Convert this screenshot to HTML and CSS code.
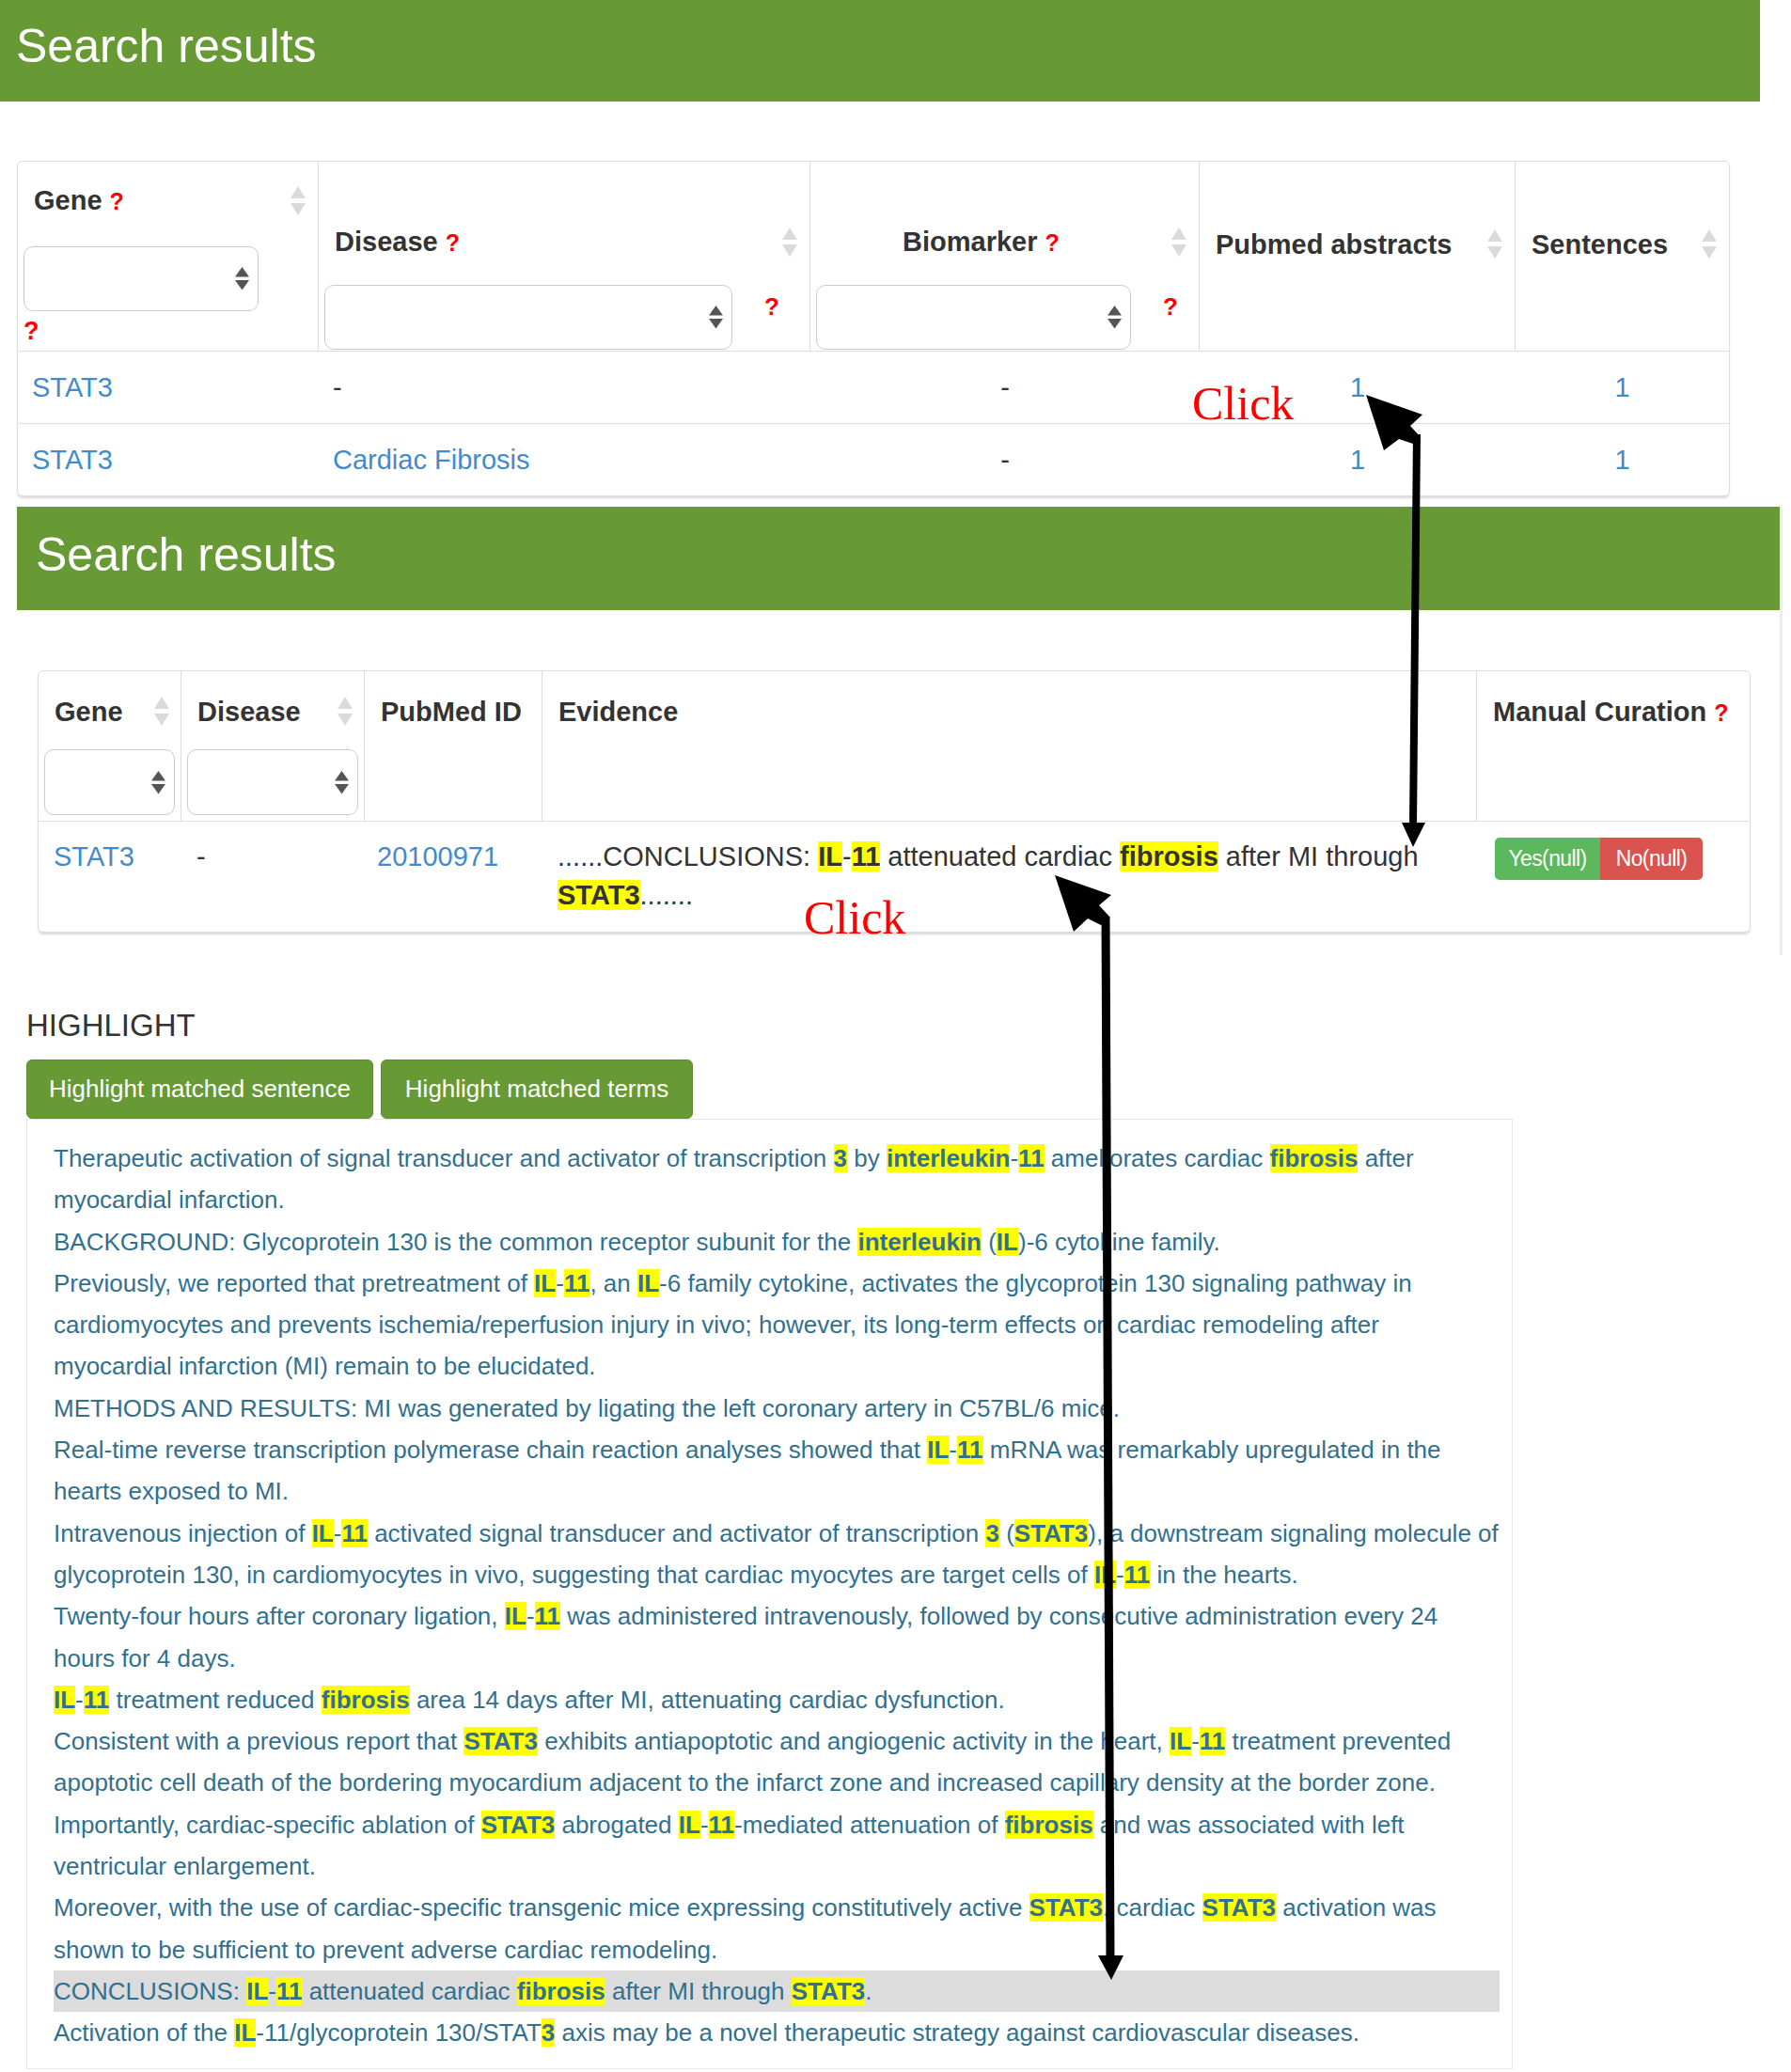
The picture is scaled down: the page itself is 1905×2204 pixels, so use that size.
FILE: index.html
```html
<!DOCTYPE html>
<html lang="en">
<head>
<meta charset="utf-8">
<title>Search results</title>
<link rel="stylesheet" href="styles.css">
</head>
<body>
<div class="page">

  <div class="banner banner-a"><h1>Search results</h1></div>

  <div class="card card-a">
    <table class="grid grid-a">
      <colgroup>
        <col class="a-gene"><col class="a-disease"><col class="a-bio"><col class="a-pub"><col class="a-sent">
      </colgroup>
      <thead>
        <tr>
          <th class="th-gene">
            <div class="th-title"><span>Gene <span class="q">?</span></span><svg class="sort" viewBox="0 0 16 32"><path d="M8 0L16 13H0Z"/><path d="M0 18H16L8 31Z"/></svg></div>
            <div class="sel sel-gene"><svg class="sel-arrow" viewBox="0 0 15 25"><path d="M7.5 0L15 10.5H0Z"/><path d="M0 14H15L7.5 24.5Z"/></svg></div>
            <div class="q q-below">?</div>
          </th>
          <th class="th-mid">
            <div class="th-title"><span>Disease <span class="q">?</span></span><svg class="sort" viewBox="0 0 16 32"><path d="M8 0L16 13H0Z"/><path d="M0 18H16L8 31Z"/></svg></div>
            <div class="sel-row">
              <div class="sel sel-disease"><svg class="sel-arrow" viewBox="0 0 15 25"><path d="M7.5 0L15 10.5H0Z"/><path d="M0 14H15L7.5 24.5Z"/></svg></div>
              <span class="q q-side">?</span>
            </div>
          </th>
          <th class="th-mid th-bio">
            <div class="th-title"><span>Biomarker <span class="q">?</span></span><svg class="sort" viewBox="0 0 16 32"><path d="M8 0L16 13H0Z"/><path d="M0 18H16L8 31Z"/></svg></div>
            <div class="sel-row">
              <div class="sel sel-bio"><svg class="sel-arrow" viewBox="0 0 15 25"><path d="M7.5 0L15 10.5H0Z"/><path d="M0 14H15L7.5 24.5Z"/></svg></div>
              <span class="q q-side">?</span>
            </div>
          </th>
          <th class="th-low">
            <div class="th-title"><span>Pubmed abstracts</span><svg class="sort" viewBox="0 0 16 32"><path d="M8 0L16 13H0Z"/><path d="M0 18H16L8 31Z"/></svg></div>
          </th>
          <th class="th-low">
            <div class="th-title"><span>Sentences</span><svg class="sort" viewBox="0 0 16 32"><path d="M8 0L16 13H0Z"/><path d="M0 18H16L8 31Z"/></svg></div>
          </th>
        </tr>
      </thead>
      <tbody>
        <tr>
          <td><a class="lnk">STAT3</a></td>
          <td class="dash">-</td>
          <td class="ctr">-</td>
          <td class="ctr"><a class="lnk">1</a></td>
          <td class="ctr"><a class="lnk">1</a></td>
        </tr>
        <tr>
          <td><a class="lnk">STAT3</a></td>
          <td><a class="lnk">Cardiac Fibrosis</a></td>
          <td class="ctr">-</td>
          <td class="ctr"><a class="lnk">1</a></td>
          <td class="ctr"><a class="lnk">1</a></td>
        </tr>
      </tbody>
    </table>
  </div>

  <div class="shot2">
    <div class="banner banner-b"><h1>Search results</h1></div>

    <div class="card card-b">
      <table class="grid grid-b">
        <colgroup>
          <col class="b-gene"><col class="b-disease"><col class="b-pmid"><col class="b-evid"><col class="b-cur">
        </colgroup>
        <thead>
          <tr>
            <th>
              <div class="th-title"><span>Gene</span><svg class="sort" viewBox="0 0 16 32"><path d="M8 0L16 13H0Z"/><path d="M0 18H16L8 31Z"/></svg></div>
              <div class="sel sel-b"><svg class="sel-arrow" viewBox="0 0 15 25"><path d="M7.5 0L15 10.5H0Z"/><path d="M0 14H15L7.5 24.5Z"/></svg></div>
            </th>
            <th>
              <div class="th-title"><span>Disease</span><svg class="sort" viewBox="0 0 16 32"><path d="M8 0L16 13H0Z"/><path d="M0 18H16L8 31Z"/></svg></div>
              <div class="sel sel-b"><svg class="sel-arrow" viewBox="0 0 15 25"><path d="M7.5 0L15 10.5H0Z"/><path d="M0 14H15L7.5 24.5Z"/></svg></div>
            </th>
            <th class="th-plain"><div class="th-title"><span>PubMed ID</span></div></th>
            <th class="th-plain"><div class="th-title"><span>Evidence</span></div></th>
            <th class="th-plain"><div class="th-title"><span>Manual Curation <span class="q">?</span></span></div></th>
          </tr>
        </thead>
        <tbody>
          <tr>
            <td><a class="lnk">STAT3</a></td>
            <td>-</td>
            <td class="pmid"><a class="lnk">20100971</a></td>
            <td class="evid">......CONCLUSIONS: <b class="hl">IL</b>-<b class="hl">11</b> attenuated cardiac <b class="hl">fibrosis</b> after MI through <b class="hl">STAT3</b>.......</td>
            <td class="cur-cell"><div class="cur"><span class="yes">Yes(null)</span><span class="no">No(null)</span></div></td>
          </tr>
        </tbody>
      </table>
    </div>
  </div>

  <section class="highlight">
    <h4>HIGHLIGHT</h4>
    <div class="tabs">
      <span class="tab tab-1">Highlight matched sentence</span>
      <span class="tab tab-2">Highlight matched terms</span>
    </div>
    <div class="panel">
      <div class="sent">Therapeutic activation of signal transducer and activator of transcription <b class="hl">3</b> by <b class="hl">interleukin</b>-<b class="hl">11</b> ameliorates cardiac <b class="hl">fibrosis</b> after myocardial infarction.</div>
      <div class="sent">BACKGROUND: Glycoprotein 130 is the common receptor subunit for the <b class="hl">interleukin</b> (<b class="hl">IL</b>)-6 cytokine family.</div>
      <div class="sent">Previously, we reported that pretreatment of <b class="hl">IL</b>-<b class="hl">11</b>, an <b class="hl">IL</b>-6 family cytokine, activates the glycoprotein 130 signaling pathway in cardiomyocytes and prevents ischemia/reperfusion injury in vivo; however, its long-term effects on cardiac remodeling after myocardial infarction (MI) remain to be elucidated.</div>
      <div class="sent">METHODS AND RESULTS: MI was generated by ligating the left coronary artery in C57BL/6 mice.</div>
      <div class="sent">Real-time reverse transcription polymerase chain reaction analyses showed that <b class="hl">IL</b>-<b class="hl">11</b> mRNA was remarkably upregulated in the hearts exposed to MI.</div>
      <div class="sent">Intravenous injection of <b class="hl">IL</b>-<b class="hl">11</b> activated signal transducer and activator of transcription <b class="hl">3</b> (<b class="hl">STAT3</b>), a downstream signaling molecule of glycoprotein 130, in cardiomyocytes in vivo, suggesting that cardiac myocytes are target cells of <b class="hl">IL</b>-<b class="hl">11</b> in the hearts.</div>
      <div class="sent">Twenty-four hours after coronary ligation, <b class="hl">IL</b>-<b class="hl">11</b> was administered intravenously, followed by consecutive administration every 24 hours for 4 days.</div>
      <div class="sent"><b class="hl">IL</b>-<b class="hl">11</b> treatment reduced <b class="hl">fibrosis</b> area 14 days after MI, attenuating cardiac dysfunction.</div>
      <div class="sent">Consistent with a previous report that <b class="hl">STAT3</b> exhibits antiapoptotic and angiogenic activity in the heart, <b class="hl">IL</b>-<b class="hl">11</b> treatment prevented apoptotic cell death of the bordering myocardium adjacent to the infarct zone and increased capillary density at the border zone.</div>
      <div class="sent">Importantly, cardiac-specific ablation of <b class="hl">STAT3</b> abrogated <b class="hl">IL</b>-<b class="hl">11</b>-mediated attenuation of <b class="hl">fibrosis</b> and was associated with left ventricular enlargement.</div>
      <div class="sent">Moreover, with the use of cardiac-specific transgenic mice expressing constitutively active <b class="hl">STAT3</b>, cardiac <b class="hl">STAT3</b> activation was shown to be sufficient to prevent adverse cardiac remodeling.</div>
      <div class="sent sent-on">CONCLUSIONS: <b class="hl">IL</b>-<b class="hl">11</b> attenuated cardiac <b class="hl">fibrosis</b> after MI through <b class="hl">STAT3</b>.</div>
      <div class="sent">Activation of the <b class="hl">IL</b>-11/glycoprotein 130/STAT<b class="hl">3</b> axis may be a novel therapeutic strategy against cardiovascular diseases.</div>
    </div>
  </section>

  <div class="annot">
    <span class="click click-1">Click</span>
    <span class="click click-2">Click</span>
    <svg class="arrows" viewBox="0 0 1905 2204" width="1905" height="2204">
      <line x1="1507" y1="462" x2="1503" y2="880" stroke="#000" stroke-width="8"/>
      <polygon points="1453,420 1513,441 1500,453 1511,465 1503,472 1488,467 1472,479" fill="#000"/>
      <polygon points="1491,875 1516,875 1503,901" fill="#000"/>
      <line x1="1176" y1="976" x2="1181" y2="2085" stroke="#000" stroke-width="9"/>
      <polygon points="1122,931 1182,952 1169,963 1181,976 1171,984 1157,977 1142,991" fill="#000"/>
      <polygon points="1168,2080 1195,2080 1182,2106" fill="#000"/>
    </svg>
  </div>

</div>
</body>
</html>
```

FILE: styles.css
```css
* {
  box-sizing: border-box;
}

body {
  margin: 0;
  background: #ffffff;
  font-family: "Liberation Sans", Arial, Helvetica, sans-serif;
  color: #333333;
}

.page {
  position: relative;
  width: 1905px;
  height: 2204px;
  overflow: hidden;
}

/* ---------- banners ---------- */
.banner {
  background: #679a35;
  color: #ffffff;
}

.banner h1 {
  margin: 0;
  font-size: 50px;
  line-height: 50px;
  font-weight: normal;
}

.banner-a {
  width: 1872px;
  height: 108px;
  padding: 24px 0 0 17px;
}

.banner-b {
  height: 110px;
  padding: 26px 0 0 20px;
}

/* ---------- cards / tables ---------- */
.card {
  width: 1822px;
  background: #ffffff;
  border: 1px solid #dddddd;
  border-radius: 6px;
  box-shadow: 0 3px 3px -1px rgba(0, 0, 0, 0.16);
  overflow: hidden;
}

.card-a {
  margin: 63px 0 0 18px;
}

.card-b {
  margin: 64px 0 0 22px;
}

.grid {
  width: 100%;
  border-collapse: separate;
  border-spacing: 0;
  table-layout: fixed;
  font-size: 29px;
}

.grid th {
  text-align: left;
  vertical-align: top;
  font-weight: bold;
  padding: 0 6px;
  border-bottom: 1px solid #dddddd;
  border-right: 1px solid #dddddd;
}

.grid th:last-child {
  border-right: none;
}

.grid td {
  padding: 0 15px;
  line-height: 36px;
  border-bottom: 1px solid #dddddd;
  vertical-align: middle;
}

.grid tbody tr:last-child td {
  border-bottom: none;
}

.th-title {
  display: flex;
  align-items: center;
  justify-content: space-between;
  line-height: 36px;
  padding: 0 7px 0 11px;
  white-space: nowrap;
}

.q {
  color: #ff0000;
  font-weight: bold;
  font-size: 25px;
}

.sort {
  flex: none;
  width: 16px;
  height: 32px;
  fill: #dadada;
}

.sel {
  display: flex;
  align-items: center;
  justify-content: flex-end;
  height: 69px;
  padding-right: 9px;
  background: #ffffff;
  border: 1px solid #cbcbcb;
  border-radius: 10px;
}

.sel-arrow {
  width: 15px;
  height: 25px;
  fill: #555555;
}

.sel-row {
  display: flex;
  align-items: flex-start;
  gap: 34px;
  margin-top: 27px;
}

.q-side {
  font-size: 26px;
  line-height: 30px;
  margin-top: 8px;
}

.q-below {
  font-size: 27px;
  line-height: 30px;
  margin-top: 6px;
}

/* table A */
.a-gene { width: 320px; }
.a-disease { width: 523px; }
.a-bio { width: 414px; }
.a-pub { width: 336px; }
.a-sent { width: 227px; }

.grid-a thead th {
  height: 202px;
}

.grid-a .th-gene {
  padding-top: 23px;
}

.grid-a .th-mid {
  padding-top: 67px;
}

.grid-a .th-low {
  padding-top: 70px;
}

.grid-a .th-bio .th-title {
  padding-left: 92px;
}

.sel-gene {
  width: 250px;
  margin-top: 30px;
}

.sel-disease {
  width: 434px;
}

.sel-bio {
  width: 335px;
}

.grid-a tbody td {
  height: 77px;
}

.grid-a tbody tr:last-child td {
  height: 76px;
}

.ctr {
  text-align: center;
}

.lnk {
  color: #428bca;
  text-decoration: none;
}

/* table B */
.shot2 {
  width: 1878px;
  margin: 11px 0 0 18px;
  padding-bottom: 24px;
  border-right: 3px solid #ececec;
}

.b-gene { width: 152px; }
.b-disease { width: 195px; }
.b-pmid { width: 189px; }
.b-evid { width: 994px; }
.b-cur { width: 290px; }

.grid-b thead th {
  height: 160px;
  padding-top: 25px;
}

.grid-b .th-title {
  padding-right: 6px;
}

.sel-b {
  height: 70px;
  margin-top: 22px;
}

.grid-b tbody td {
  height: 117px;
  vertical-align: top;
  padding: 17px 16px 0 16px;
  line-height: 41px;
}

.grid-b .pmid {
  padding-left: 13px;
}

.grid-b .cur-cell {
  padding-left: 19px;
}

.evid .hl {
  color: #333333;
}

.cur {
  display: flex;
  height: 45px;
}

.yes,
.no {
  display: flex;
  align-items: center;
  justify-content: center;
  height: 45px;
  color: #ffffff;
  font-size: 23px;
  letter-spacing: -0.6px;
}

.yes {
  width: 112px;
  background: #5cb85c;
  border-radius: 5px 0 0 5px;
}

.no {
  width: 109px;
  background: #d9534f;
  border-radius: 0 5px 5px 0;
}

/* ---------- highlight section ---------- */
.highlight {
  width: 1581px;
  margin: 55px 0 0 28px;
}

.highlight h4 {
  margin: 0;
  font-size: 33px;
  line-height: 40px;
  font-weight: normal;
  color: #333333;
}

.tabs {
  display: flex;
  gap: 8px;
  margin-top: 16px;
}

.tab {
  display: block;
  height: 63px;
  line-height: 61px;
  text-align: center;
  font-size: 26px;
  color: #ffffff;
  background: #679a35;
  border: 1px solid #5d8d2f;
  border-radius: 6px;
}

.tab-1 {
  width: 369px;
}

.tab-2 {
  width: 332px;
}

.panel {
  height: 1011px;
  padding: 19px 13px 16px 28px;
  border: 1px solid #e8e8e8;
  font-size: 26px;
  line-height: 44.3px;
  color: #31708f;
}

.hl {
  background: #ffff00;
  font-weight: bold;
}

.sent-on {
  background: #dcdcdc;
}

/* ---------- annotation overlay ---------- */
.annot {
  position: absolute;
  left: 0;
  top: 0;
  width: 1905px;
  height: 2204px;
  pointer-events: none;
}

.arrows {
  position: absolute;
  left: 0;
  top: 0;
}

.click {
  position: absolute;
  font-family: "Liberation Serif", "Times New Roman", serif;
  font-size: 50px;
  line-height: 50px;
  color: #ff0000;
}

.click-1 {
  left: 1268px;
  top: 404px;
}

.click-2 {
  left: 855px;
  top: 951px;
}
```
